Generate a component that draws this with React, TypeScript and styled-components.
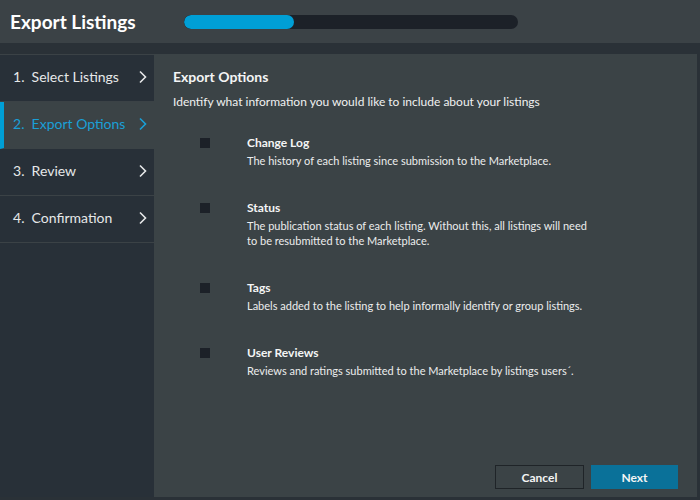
import React from "react"
import styled, { createGlobalStyle } from "styled-components"

const GlobalStyle = createGlobalStyle`
  html, body {
    margin: 0;
    padding: 0;
    background: #2a3137;
    font-family: Lato, "Open Sans", sans-serif;
  }
  * { box-sizing: border-box; }
`

const steps = ["Select Listings", "Export Options", "Review", "Confirmation"]

const options = [
  { title: "Change Log", desc: "The history of each listing since submission to the Marketplace." },
  {
    title: "Status",
    desc: "The publication status of each listing. Without this, all listings will need to be resubmitted to the Marketplace.",
  },
  { title: "Tags", desc: "Labels added to the listing to help informally identify or group listings." },
  { title: "User Reviews", desc: "Reviews and ratings submitted to the Marketplace by listings users\u00b4." },
]

const Chevron = ({ color }: { color: string }) => (
  <svg width="10" height="14" viewBox="0 0 10 14">
    <path d="M2 1.5 L7.5 7 L2 12.5" fill="none" stroke={color} strokeWidth="1.6" />
  </svg>
)

export default function App() {
  const progress = 33
  return (
    <>
      <GlobalStyle />
      <Page>
        <Header>
          <Title>Export Listings</Title>
          <Track>
            <Fill style={{ width: `${progress}%` }} />
          </Track>
        </Header>
        <Body>
          <Sidebar>
            {steps.map((s, i) => (
              <Step key={s} $active={i === 1}>
                <span>
                  {i + 1}.&nbsp; {s}
                </span>
                <Chevron color={i === 1 ? "#1a9fd6" : "#e6e8e9"} />
              </Step>
            ))}
          </Sidebar>
          <Panel>
            <PanelTitle>Export Options</PanelTitle>
            <Intro>Identify what information you would like to include about your listings</Intro>
            <OptionList>
              {options.map((o) => (
                <Option key={o.title}>
                  <Box />
                  <OptionText>
                    <OptionTitle>{o.title}</OptionTitle>
                    <OptionDesc>{o.desc}</OptionDesc>
                  </OptionText>
                </Option>
              ))}
            </OptionList>
            <Footer>
              <Button>Cancel</Button>
              <Button $primary>Next</Button>
            </Footer>
          </Panel>
        </Body>
      </Page>
    </>
  )
}

const Page = styled.div`
  width: 700px;
  height: 500px;
  display: flex;
  flex-direction: column;
  background: #2a3137;
  color: #f2f3f3;
`

const Header = styled.header`
  height: 43px;
  background: #3b4246;
  display: flex;
  align-items: center;
  padding-left: 10px;
`

const Title = styled.h1`
  margin: 0;
  width: 174px;
  font-size: 19px;
  font-weight: 700;
  color: #ffffff;
`

const Track = styled.div`
  width: 334px;
  height: 14px;
  border-radius: 7px;
  background: #1c2128;
  margin-top: 1px;
  overflow: hidden;
`

const Fill = styled.div`
  height: 100%;
  border-radius: 7px;
  background: #009fd6;
`

const Body = styled.div`
  flex: 1;
  display: flex;
  padding-top: 11px;
  padding-right: 3px;
  padding-bottom: 3px;
`

const Sidebar = styled.nav`
  width: 154px;
  background: #283038;
  border-top: 1px solid #3b4246;
`

const Step = styled.div<{ $active?: boolean }>`
  height: 47px;
  display: flex;
  align-items: center;
  justify-content: space-between;
  padding: 0 6px 3px ${(p) => (p.$active ? "9px" : "13px")};
  font-size: 14px;
  color: ${(p) => (p.$active ? "#1a9fd6" : "#e6e8e9")};
  background: ${(p) => (p.$active ? "#3b4346" : "transparent")};
  border-left: ${(p) => (p.$active ? "4px solid #009fd6" : "none")};
  border-bottom: 1px solid ${(p) => (p.$active ? "#3b4346" : "#3b4246")};
`

const Panel = styled.main`
  flex: 1;
  background: #3b4346;
  display: flex;
  flex-direction: column;
  padding: 14px 19px 8px 19px;
`

const PanelTitle = styled.h2`
  margin: 0;
  font-size: 14px;
  font-weight: 700;
  color: #f4f5f5;
`

const Intro = styled.p`
  margin: 9px 0 0;
  font-size: 12px;
  color: #f0f1f1;
`

const OptionList = styled.div`
  display: flex;
  flex-direction: column;
  gap: 32px;
  margin-top: 26px;
  padding-left: 27px;
`

const Option = styled.div`
  display: flex;
  align-items: flex-start;
  gap: 37px;
`

const Box = styled.span`
  width: 10px;
  height: 10px;
  margin-top: 3px;
  background: #1c2128;
  flex-shrink: 0;
`

const OptionText = styled.div`
  display: flex;
  flex-direction: column;
  gap: 3px;
  width: 350px;
`

const OptionTitle = styled.div`
  font-size: 12px;
  font-weight: 700;
  color: #f4f5f5;
`

const OptionDesc = styled.div`
  font-size: 11px;
  line-height: 15px;
  color: #eceded;
`

const Footer = styled.div`
  margin-top: auto;
  display: flex;
  justify-content: flex-end;
  gap: 7px;
`

const Button = styled.button<{ $primary?: boolean }>`
  width: ${(p) => (p.$primary ? "87px" : "89px")};
  height: 24px;
  font-family: inherit;
  font-size: 12px;
  font-weight: 700;
  color: #f4f5f5;
  background: ${(p) => (p.$primary ? "#0a7199" : "transparent")};
  border: 1px solid ${(p) => (p.$primary ? "#0a7199" : "#1f2428")};
  cursor: pointer;
`
